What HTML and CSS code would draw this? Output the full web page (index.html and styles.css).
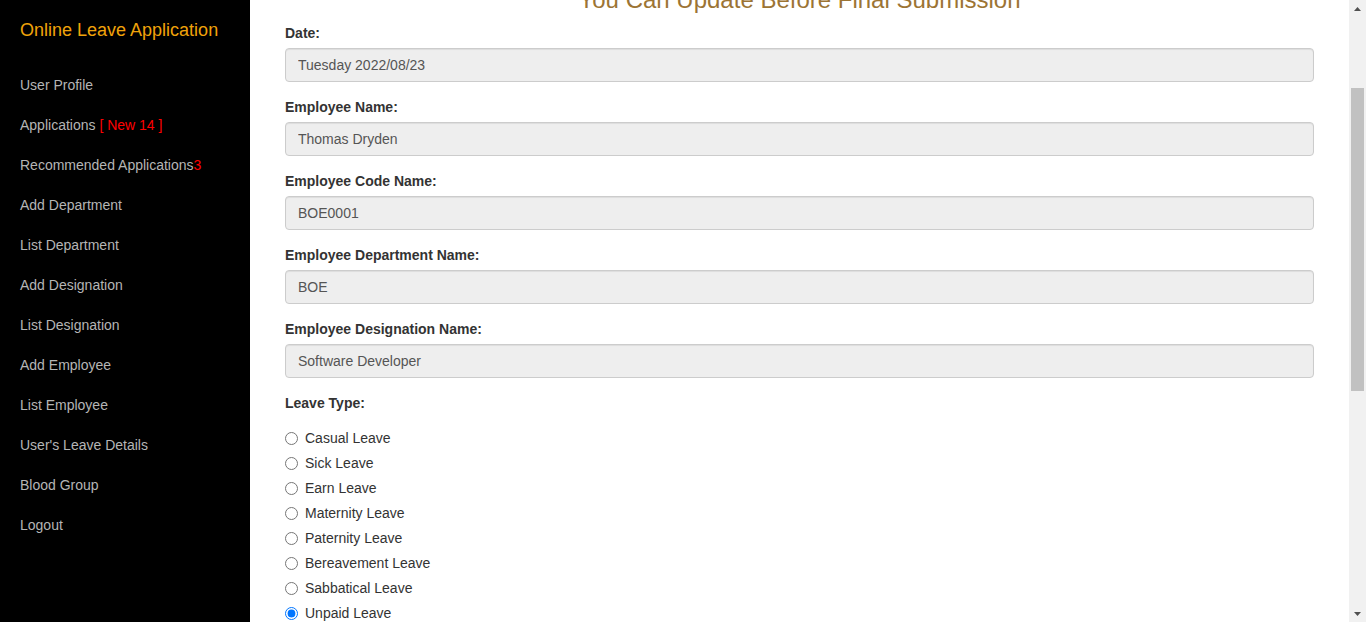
FILE: index.html
```html
<!DOCTYPE html>
<html lang="en">
<head>
<meta charset="utf-8">
<title>Online Leave Application</title>
<link rel="stylesheet" href="styles.css">
</head>
<body>
<div class="app">
  <aside class="sidebar">
    <h1 class="brand">Online Leave Application</h1>
    <nav class="nav">
      <a class="nav-item" href="#">User Profile</a>
      <a class="nav-item" href="#">Applications <span class="badge">[ New 14 ]</span></a>
      <a class="nav-item" href="#">Recommended Applications<span class="badge">3</span></a>
      <a class="nav-item" href="#">Add Department</a>
      <a class="nav-item" href="#">List Department</a>
      <a class="nav-item" href="#">Add Designation</a>
      <a class="nav-item" href="#">List Designation</a>
      <a class="nav-item" href="#">Add Employee</a>
      <a class="nav-item" href="#">List Employee</a>
      <a class="nav-item" href="#">User's Leave Details</a>
      <a class="nav-item" href="#">Blood Group</a>
      <a class="nav-item" href="#">Logout</a>
    </nav>
  </aside>
  <main class="main" id="main">
    <div class="content">
      <h3 class="page-title">You Can Update Before Final Submission</h3>
      <form class="form">
        <div class="form-group">
          <label class="field-label">Date:</label>
          <input class="form-control" type="text" value="Tuesday 2022/08/23" disabled>
        </div>
        <div class="form-group">
          <label class="field-label">Employee Name:</label>
          <input class="form-control" type="text" value="Thomas Dryden" disabled>
        </div>
        <div class="form-group">
          <label class="field-label">Employee Code Name:</label>
          <input class="form-control" type="text" value="BOE0001" disabled>
        </div>
        <div class="form-group">
          <label class="field-label">Employee Department Name:</label>
          <input class="form-control" type="text" value="BOE" disabled>
        </div>
        <div class="form-group">
          <label class="field-label">Employee Designation Name:</label>
          <input class="form-control" type="text" value="Software Developer" disabled>
        </div>
        <div class="form-group radios">
          <label class="field-label">Leave Type:</label>
          <div class="radio-list">
            <label class="radio"><input type="radio" name="leave"> Casual Leave</label>
            <label class="radio"><input type="radio" name="leave"> Sick Leave</label>
            <label class="radio"><input type="radio" name="leave"> Earn Leave</label>
            <label class="radio"><input type="radio" name="leave"> Maternity Leave</label>
            <label class="radio"><input type="radio" name="leave"> Paternity Leave</label>
            <label class="radio"><input type="radio" name="leave"> Bereavement Leave</label>
            <label class="radio"><input type="radio" name="leave"> Sabbatical Leave</label>
            <label class="radio"><input type="radio" name="leave" checked> Unpaid Leave</label>
          </div>
        </div>
      </form>
    </div>
  </main>
  <div class="scrollbar" aria-hidden="true">
    <div class="sb-btn">
      <svg width="7" height="4" viewBox="0 0 7 4"><polygon points="0,4 3.5,0 7,4" fill="#505050"/></svg>
    </div>
    <div class="sb-track">
      <div class="sb-thumb"></div>
    </div>
    <div class="sb-btn">
      <svg width="7" height="4" viewBox="0 0 7 4"><polygon points="0,0 7,0 3.5,4" fill="#505050"/></svg>
    </div>
  </div>
</div>
<script src="script.js"></script>
</body>
</html>
```

FILE: styles.css
```css
* { box-sizing: border-box; }

html, body {
  margin: 0;
  padding: 0;
  height: 100%;
}

body {
  font-family: "Liberation Sans", Arial, Helvetica, sans-serif;
  font-size: 14px;
  line-height: 20px;
  color: #333;
  background: #fff;
  overflow: hidden;
}

.app {
  display: flex;
  height: 100vh;
}

.sidebar {
  width: 250px;
  flex: 0 0 250px;
  background: #000;
  padding: 19px 20px 0;
}

.brand {
  margin: 0;
  font-size: 18px;
  line-height: 22px;
  font-weight: normal;
  color: #f0a30a;
}

.nav {
  display: flex;
  flex-direction: column;
  margin-top: 24px;
}

.nav-item {
  display: block;
  height: 40px;
  line-height: 40px;
  font-size: 14px;
  color: #b5b5b5;
  text-decoration: none;
  white-space: nowrap;
}

.badge {
  color: #ff0000;
}

.main {
  flex: 1;
  min-width: 0;
  overflow-y: scroll;
  background: #fff;
  scrollbar-width: none;
}

.main::-webkit-scrollbar {
  display: none;
}

.scrollbar {
  flex: 0 0 17px;
  width: 17px;
  background: #f1f1f1;
  display: flex;
  flex-direction: column;
}

.sb-btn {
  flex: 0 0 17px;
  height: 17px;
  display: flex;
  align-items: center;
  justify-content: center;
}

.sb-btn svg {
  display: block;
}

.sb-track {
  flex: 1;
  padding-top: 71px;
}

.sb-thumb {
  width: 13px;
  height: 303px;
  margin-left: 2px;
  background: #c1c1c1;
}

.content {
  padding: 113px 35px 428px;
}

.page-title {
  margin: 20px 0 10px;
  font-size: 24px;
  line-height: 26px;
  font-weight: normal;
  text-align: center;
  color: #9c7434;
}

.form {
  margin: 0;
}

.form-group {
  display: flex;
  flex-direction: column;
  margin-bottom: 15px;
}

.field-label {
  display: block;
  font-weight: bold;
  margin-bottom: 5px;
  color: #333;
}

.form-control {
  display: block;
  width: 100%;
  height: 34px;
  padding: 6px 12px;
  font-family: inherit;
  font-size: 14px;
  line-height: 20px;
  color: #555;
  background: #eee;
  border: 1px solid #ccc;
  border-radius: 4px;
  box-shadow: inset 0 1px 1px rgba(0, 0, 0, 0.075);
  opacity: 1;
  -webkit-text-fill-color: #555;
}

.radios {
  margin-bottom: 0;
}

.radio-list {
  display: flex;
  flex-direction: column;
  gap: 5px;
  padding-top: 10px;
  padding-bottom: 10px;
}

.radio {
  display: flex;
  align-items: center;
  gap: 7px;
  height: 20px;
  font-weight: normal;
  color: #333;
}

.radio input {
  width: 13px;
  height: 13px;
  margin: 0;
}
```

FILE: script.js
```js
document.getElementById('main').scrollTop = 146;
```
